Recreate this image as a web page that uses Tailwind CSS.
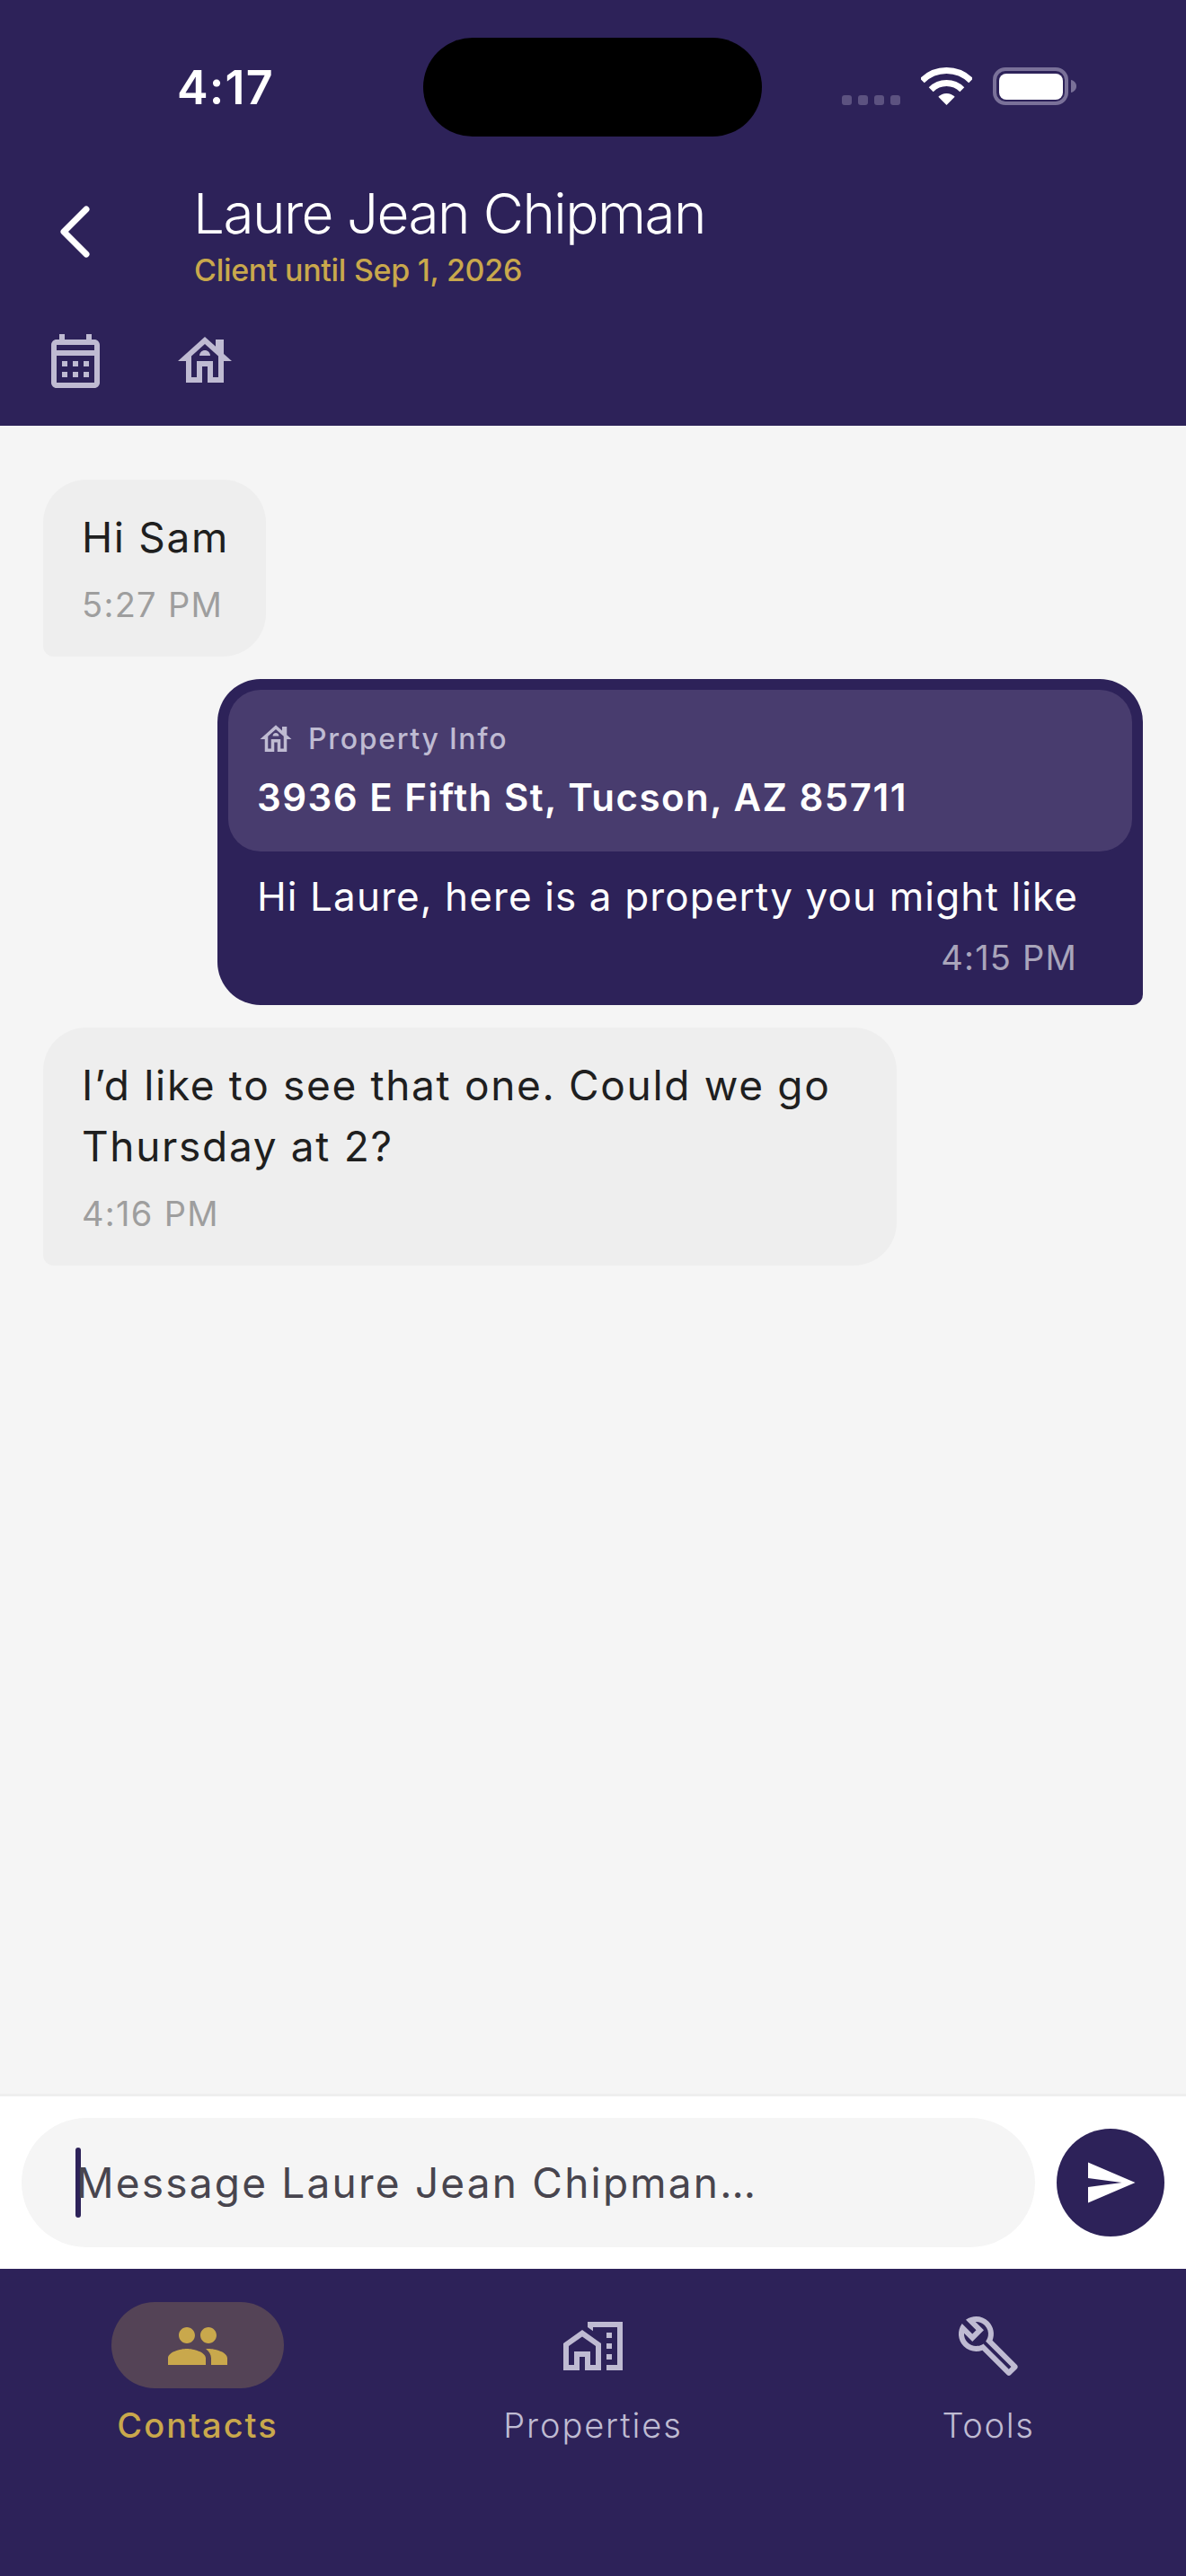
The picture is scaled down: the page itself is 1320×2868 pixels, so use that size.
<!DOCTYPE html>
<html>
<head>
<meta charset="utf-8">
<script src="https://cdn.jsdelivr.net/npm/@tailwindcss/browser@4"></script>
</head>
<body class="bg-[#f5f5f5]">
<div class="w-[1320px] h-[2868px] flex flex-col font-['Inter',sans-serif] bg-[#f5f5f5] overflow-hidden">

  <header class="bg-[#2d2259] h-[474px] pt-[42px] shrink-0">
    <div class="flex items-center h-[110px] pl-[197px]">
      <div class="w-[274px] text-white text-[52px] leading-[60px] font-semibold tracking-[1.2px] pt-[2px]">4:17</div>
      <div class="w-[377px] h-[110px] rounded-[55px] bg-black"></div>
      <div class="ml-[89px] flex items-end gap-[23px] h-[42px] mb-[2px]">
        <div class="flex gap-[7px]">
          <span class="w-[11px] h-[11px] rounded-[3px] bg-[#5c5280]"></span>
          <span class="w-[11px] h-[11px] rounded-[3px] bg-[#5c5280]"></span>
          <span class="w-[11px] h-[11px] rounded-[3px] bg-[#5c5280]"></span>
          <span class="w-[11px] h-[11px] rounded-[3px] bg-[#5c5280]"></span>
        </div>
        <svg class="block" width="57" height="42" viewBox="0 0 57 42" fill="none"><path d="M1.3 14.8A38.5 38.5 0 0 1 55.7 14.8" stroke="#fff" stroke-width="7"/><path d="M11.2 24.7A24.5 24.5 0 0 1 45.8 24.7" stroke="#fff" stroke-width="7"/><path d="M28.5 42L19.3 32.8A13 13 0 0 1 37.7 32.8Z" fill="#fff"/></svg>
        <svg class="block" width="93" height="42" viewBox="0 0 93 42" fill="none"><rect x="2" y="2" width="80" height="38" rx="12" stroke="#7a7199" stroke-width="4"/><rect x="7" y="7" width="71" height="29" rx="8" fill="#fff"/><path d="M87 14c3 .5 6 3 6 7s-3 6.500-6 7z" fill="#7a7199"/></svg>
      </div>
    </div>

    <div class="flex mt-[50px] h-[121px]">
      <div class="w-[215px] pl-[60px] pt-[20px] shrink-0">
        <svg class="block" width="48" height="72" viewBox="0 0 48 72" fill="none"><path d="M36 11L11 36L36 61" stroke="#fff" stroke-width="7" stroke-linecap="round" stroke-linejoin="round"/></svg>
      </div>
      <div>
        <div class="text-white text-[62px] leading-[72px] font-light tracking-[-1.55px]">Laure Jean Chipman</div>
        <div class="mt-[5px] ml-[1px] text-[#c9a84c] text-[34px] leading-[44px] font-medium tracking-[-0.3px]">Client until Sep 1, 2026</div>
      </div>
    </div>

    <div class="flex mt-[43px] pl-[48px] gap-[72px]">
      <svg class="block" width="72" height="72" viewBox="0 0 24 24" fill="#bfbbd2"><path d="M19 4h-1V2h-2v2H8V2H6v2H5c-1.110 0-1.990.9-1.990 2L3 20c0 1.100.89 2 2 2h14c1.100 0 2-.9 2-2V6c0-1.100-.9-2-2-2zm0 16H5V10h14v10zm0-12H5V6h14v2zM9 14H7v-2h2v2zm4 0h-2v-2h2v2zm4 0h-2v-2h2v2zm-8 4H7v-2h2v2zm4 0h-2v-2h2v2zm4 0h-2v-2h2v2z"/></svg>
      <svg class="block" width="72" height="72" viewBox="0 0 24 24" fill="#bfbbd2"><path d="M19 9.300V4h-3v2.600L12 3 2 12h3v8h6v-6h2v6h6v-8h3l-3-2.700zM17 18h-2v-6H9v6H7v-7.810l5-4.500 5 4.500V18z"/><path d="M10 10h4c0-1.100-.9-2-2-2s-2 .9-2 2z"/></svg>
    </div>
  </header>

  <main class="flex-1 flex flex-col gap-[25px] pt-[60px] min-h-0">
    <div class="self-start ml-[48px] w-[248px] pl-[43px] pt-[30px] pb-[33px] bg-[#eeeeee] rounded-[48px] rounded-bl-[12px]">
      <div class="text-[#1f1f1f] text-[46px] leading-[68px] font-normal tracking-[1.67px]">Hi Sam</div>
      <div class="mt-[16px] text-[#9e9e9e] text-[38px] leading-[50px] font-normal tracking-[1.3px]">5:27 PM</div>
    </div>

    <div class="self-end mr-[48px] w-[1030px] h-[363px] p-[12px] bg-[#2d2259] rounded-[48px] rounded-br-[12px]">
      <div class="h-[180px] rounded-[36px] bg-[#483c6e] pl-[32px] pt-[34px]">
        <div class="flex items-center h-[42px]">
          <svg class="block shrink-0" width="42" height="42" viewBox="0 0 24 24" fill="#bfbbd2"><path d="M19 9.300V4h-3v2.600L12 3 2 12h3v8h6v-6h2v6h6v-8h3l-3-2.700zM17 18h-2v-6H9v6H7v-7.810l5-4.500 5 4.500V18z"/><path d="M10 10h4c0-1.100-.9-2-2-2s-2 .9-2 2z"/></svg>
          <span class="ml-[15px] text-[#bfbbd2] text-[32px] leading-[42px] font-medium tracking-[1.7px]">Property Info</span>
        </div>
        <div class="mt-[14px] text-white text-[42px] leading-[60px] font-semibold tracking-[1.5px]">3936 E Fifth St, Tucson, AZ 85711</div>
      </div>
      <div class="mt-[16px] px-[32px] text-white text-[44px] leading-[68px] font-normal tracking-[1.12px]">Hi Laure, here is a property you might like</div>
      <div class="mt-[9px] pr-[61px] text-right text-white/60 text-[38px] leading-[50px] font-normal tracking-[1.2px]">4:15 PM</div>
    </div>

    <div class="self-start ml-[48px] w-[950px] pl-[43px] pr-[40px] pt-[30px] pb-[33px] bg-[#eeeeee] rounded-[48px] rounded-bl-[12px]">
      <div class="text-[#1f1f1f] text-[46px] leading-[68px] font-normal tracking-[1.67px]">I’d like to see that one. Could we go<br>Thursday at 2?</div>
      <div class="mt-[16px] text-[#9e9e9e] text-[38px] leading-[50px] font-normal tracking-[1.3px]">4:16 PM</div>
    </div>
  </main>

  <div class="shrink-0 bg-white border-t-[3px] border-[#eeeeee] pt-[24px] pb-[24px] pl-[24px] pr-[24px] flex items-center gap-[24px]">
    <div class="w-[1128px] h-[144px] rounded-full bg-[#f5f5f5] pl-[60px] flex items-center">
      <span class="block w-[6px] h-[78px] rounded-full bg-[#2d2259] shrink-0"></span>
      <span class="-ml-[5px] text-[#48454e] text-[46px] leading-[68px] font-normal tracking-[2.2px]">Message Laure Jean Chipman…</span>
    </div>
    <div class="w-[120px] h-[120px] rounded-full bg-[#2d2259] flex items-center justify-center">
      <svg class="block" width="60" height="60" viewBox="0 0 24 24" fill="#fff"><path d="M2.010 21L23 12 2.010 3 2 10l15 2-15 2z"/></svg>
    </div>
  </div>

  <nav class="shrink-0 h-[342px] bg-[#2d2259] grid grid-cols-3 pt-[37px]">
    <div class="flex flex-col items-center">
      <div class="w-[192px] h-[96px] rounded-full bg-[#544356] flex justify-center pt-[13px]">
        <svg class="block" width="72" height="72" viewBox="0 0 24 24" fill="#c9a84c"><path d="M16 11c1.660 0 2.990-1.340 2.990-3S17.660 5 16 5c-1.660 0-3 1.340-3 3s1.340 3 3 3zm-8 0c1.660 0 2.990-1.340 2.990-3S9.660 5 8 5C6.340 5 5 6.340 5 8s1.340 3 3 3zm0 2c-2.330 0-7 1.170-7 3.500V19h14v-2.500c0-2.330-4.670-3.500-7-3.500zm8 0c-.29 0-.62.02-.97.05 1.160.84 1.970 1.970 1.970 3.450V19h6v-2.500c0-2.330-4.670-3.500-7-3.500z"/></svg>
      </div>
      <div class="mt-[16px] text-[#c9a84c] text-[38px] leading-[50px] font-medium tracking-[2px]">Contacts</div>
    </div>
    <div class="flex flex-col items-center">
      <div class="h-[96px] flex justify-center pt-[13px]">
        <svg class="block" width="72" height="72" viewBox="0 0 24 24" fill="#bfbbd2"><path d="M1 11v10h6v-5h2v5h6V11L8 6l-7 5zm12 8h-2v-5H5v5H3v-7l5-3.500 5 3.500v7z"/><path d="M17 7h2v2h-2zM17 11h2v2h-2zM17 15h2v2h-2z"/><path d="M10 3v1.970l2 1.430V5h9v14h-4v2h6V3z"/></svg>
      </div>
      <div class="mt-[16px] text-[#bfbbd2] text-[38px] leading-[50px] font-light tracking-[1.9px]">Properties</div>
    </div>
    <div class="flex flex-col items-center">
      <div class="h-[96px] flex justify-center pt-[13px]">
        <svg class="block" width="72" height="72" viewBox="0 0 24 24" fill="#bfbbd2"><path d="M22.610 18.990l-9.080-9.080c.93-2.340.45-5.100-1.440-7C9.790.61 6.210.4 3.660 2.260L7.500 6.110 6.080 7.520 2.250 3.690C.39 6.230.6 9.820 2.900 12.110c1.860 1.860 4.570 2.350 6.890 1.480l9.110 9.110c.39.39 1.020.39 1.410 0l2.300-2.300c.4-.38.4-1.010 0-1.410zm-3 1.600l-9.460-9.460c-.61.45-1.290.72-2 .82-1.360.2-2.790-.21-3.830-1.250C3.370 9.760 2.930 8.500 3 7.260l3.090 3.090 4.240-4.240-3.090-3.090c1.240-.07 2.490.37 3.440 1.310 1.080 1.080 1.490 2.570 1.240 3.960-.13.71-.43 1.370-.89 1.960l9.450 9.450-.87.88z"/></svg>
      </div>
      <div class="mt-[16px] text-[#bfbbd2] text-[38px] leading-[50px] font-light tracking-[1.7px]">Tools</div>
    </div>
  </nav>
</div>
</body>
</html>
